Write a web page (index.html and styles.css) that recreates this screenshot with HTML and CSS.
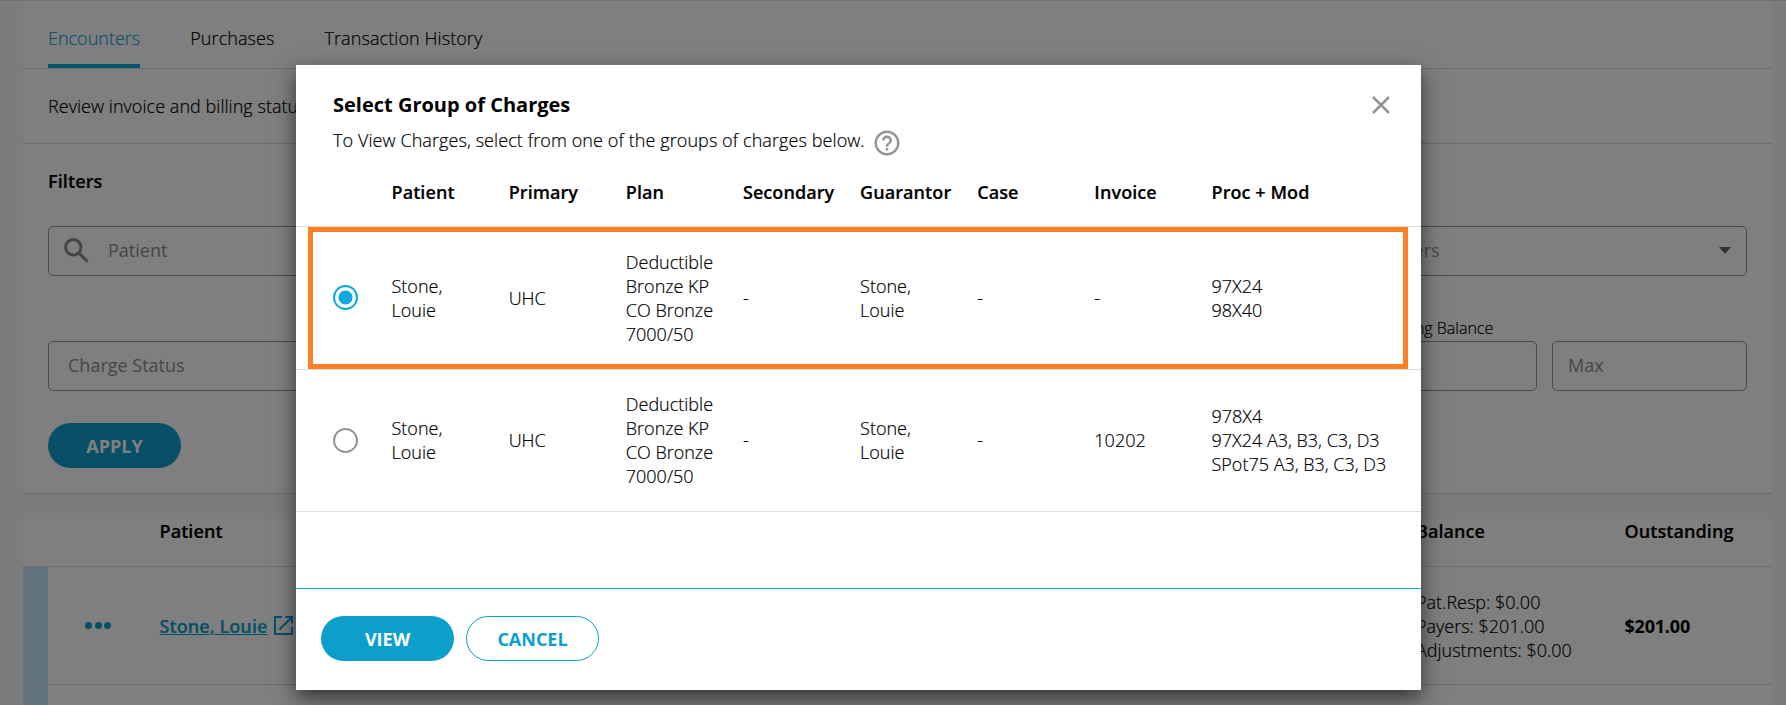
FILE: index.html
```
<!DOCTYPE html>
<html lang="en">
<head>
<meta charset="utf-8">
<title>Encounters</title>
<link rel="stylesheet" href="styles.css">
</head>
<body>
<main class="page">
  <section class="panel">
    <nav class="tabs">
      <a class="tab tab-active">Encounters</a>
      <a class="tab">Purchases</a>
      <a class="tab">Transaction History</a>
    </nav>
    <p class="intro">Review invoice and billing status</p>
    <div class="filters">
      <h2 class="filters-title">Filters</h2>
      <div class="filter-row">
        <div class="field field-search">
          <svg class="search-icon" viewBox="0 0 25 25"><circle cx="9.3" cy="9.3" r="7.7"/><path d="M15.4 15.4l8.3 8.3"/></svg>
          <span>Patient</span>
        </div>
        <div class="field field-select"><span>Providers</span><i class="caret"></i></div>
      </div>
      <div class="filter-row filter-row-second">
        <div class="field field-status"><span>Charge Status</span></div>
        <div class="range">
          <span class="range-label">Outstanding Balance</span>
          <div class="range-fields">
            <div class="field field-range"></div>
            <div class="field field-range"><span>Max</span></div>
          </div>
        </div>
      </div>
      <button class="btn btn-primary">APPLY</button>
    </div>
  </section>
  <section class="encounters">
    <div class="enc-row enc-head"><span class="enc-patient">Patient</span><span>Balance</span><span>Outstanding</span></div>
    <div class="enc-row enc-body">
      <span class="dots"><i></i><i></i><i></i></span>
      <span class="patient-cell"><a class="link">Stone, Louie</a><svg class="open-icon" viewBox="0 0 19 19"><path d="M8 1H1v17h17v-7M11.500 1H18v6.500M18 1L5.500 13.500"/></svg></span>
      <span>Pat.Resp: $0.00<br>Payers: $201.00<br>Adjustments: $0.00</span>
      <b>$201.00</b>
    </div>
    <div class="enc-row enc-next"></div>
  </section>
</main>
<div class="overlay">
  <div class="modal">
    <header class="modal-head">
      <div>
        <h1 class="title">Select Group of Charges</h1>
        <div class="subtitle"><span>To View Charges, select from one of the groups of charges below.</span>
          <svg class="help-icon" viewBox="0 0 24 24"><path d="M11 18h2v-2h-2v2zm1-16C6.480 2 2 6.480 2 12s4.480 10 10 10 10-4.480 10-10S17.520 2 12 2zm0 18c-4.410 0-8-3.590-8-8s3.590-8 8-8 8 3.590 8 8-3.590 8-8 8zm0-14c-2.210 0-4 1.790-4 4h2c0-1.100.9-2 2-2s2 .9 2 2c0 2-3 1.750-3 5h2c0-2.250 3-2.500 3-5 0-2.210-1.790-4-4-4z"/></svg>
        </div>
      </div>
      <svg class="close-icon" viewBox="0 0 18 18"><path d="M1 1l16 16M17 1L1 17"/></svg>
    </header>
    <div class="grid-row grid-head">
      <span></span><span>Patient</span><span>Primary</span><span>Plan</span><span>Secondary</span><span>Guarantor</span><span>Case</span><span>Invoice</span><span>Proc + Mod</span>
    </div>
    <div class="grid-row grid-body selected">
      <i class="radio radio-on"></i><span>Stone, Louie</span><span>UHC</span><span>Deductible Bronze KP CO Bronze 7000/50</span><span>-</span><span>Stone, Louie</span><span>-</span><span>-</span><span class="proc">97X24<br>98X40</span>
    </div>
    <div class="grid-row grid-body">
      <i class="radio"></i><span>Stone, Louie</span><span>UHC</span><span>Deductible Bronze KP CO Bronze 7000/50</span><span>-</span><span>Stone, Louie</span><span>-</span><span>10202</span><span class="proc">978X4<br>97X24 A3, B3, C3, D3<br>SPot75 A3, B3, C3, D3</span>
    </div>
    <footer class="modal-foot">
      <button class="btn btn-primary">VIEW</button>
      <button class="btn btn-outline">CANCEL</button>
    </footer>
  </div>
</div>
</body>
</html>
```
FILE: styles.css
```
* { box-sizing: border-box; }
html, body { height: 100%; }
body {
  margin: 0;
  overflow: hidden;
  background: #f6f9fd;
  color: #000;
  font: 300 18px/24px "Open Sans", sans-serif;
  -webkit-text-stroke: .2px;
}
h1, h2, p { margin: 0; }

.page { height: 705px; overflow: hidden; padding: 0 14px 0 23px; border-top: 1px solid #dcdfe2; }
.panel { background: #fff; border-bottom: 1px solid #d5d9de; height: 493px; }
.tabs { display: flex; gap: 50px; height: 68px; padding: 25px 25px 0; border-bottom: 1px solid #d9d9d9; }
.tab { height: 42px; letter-spacing: .08px; }
.tab-active { color: #0ea5d8; border-bottom: 4px solid #0ea5d8; letter-spacing: 0; }
.intro { height: 75px; padding: 25px 25px 0; border-bottom: 1px solid #d9d9d9; letter-spacing: .04px; }
.filters { padding: 25px 25px 0; }
.filters-title { font-size: 18px; font-weight: 600; line-height: 24px; margin-bottom: 33px; letter-spacing: .12px; }
.filter-row { display: flex; justify-content: space-between; }
.filter-row-second { margin: 42px 0 32px; align-items: flex-end; }
.field { display: flex; align-items: center; height: 50px; padding-bottom: 2px; border: 1px solid #949494; border-radius: 5px; color: #8c8c8c; font-weight: 400; -webkit-text-stroke: 0; }
.field-search { width: 410px; padding-left: 15px; gap: 19px; }
.search-icon { width: 25px; height: 25px; fill: none; stroke: #8a8a8a; stroke-width: 3; }
.field-select { width: 410px; padding-left: 22px; padding-right: 15px; justify-content: space-between; }
.caret { border: 6.500px solid transparent; border-top: 7px solid #666; border-bottom: 0; }
.field-status { width: 410px; padding-left: 19px; }
.range { width: 405px; }
.range-label { display: block; height: 20px; margin-bottom: 3px; padding-left: 2px; font-size: 16px; line-height: 20px; }
.range-fields { display: flex; gap: 15px; }
.field-range { width: 195px; padding-left: 15px; }

.btn { width: 133px; height: 45px; padding: 0; border-radius: 23px; font: 700 18px/24px "Open Sans", sans-serif; -webkit-text-stroke: 0; }
.btn-primary { border: 0; background: #0c9fcc; color: #fff; }
.btn-outline { border: 1px solid #0c9fcc; background: #fff; color: #0c9fcc; }

.encounters { margin-top: 25px; background: #fff; }
.enc-row { display: grid; grid-template-columns: 62px 74.500px 1256.500px 208.500px 1fr; border-bottom: 1px solid #d9d9d9; }
.enc-head { height: 48px; font-weight: 600; letter-spacing: .08px; }
.enc-head .enc-patient { grid-column: 3; }
.enc-body { height: 118px; align-items: center; box-shadow: inset 25px 0 #c0e4fa; }
.enc-body .dots { grid-column: 2; display: flex; gap: 2.500px; }
.enc-body b { font-weight: 700; -webkit-text-stroke: 0; letter-spacing: -.2px; }
.enc-next { height: 30px; box-shadow: inset 25px 0 #c0e4fa; }
.dots i { width: 7px; height: 7px; border-radius: 50%; background: #0aa0cf; }
.patient-cell { display: flex; align-items: center; gap: 7px; }
.link { color: #0aa0cf; font-weight: 600; text-decoration: underline; letter-spacing: .08px; }
.open-icon { width: 19px; height: 19px; fill: none; stroke: #0aa0cf; stroke-width: 2; }

.overlay { position: absolute; inset: 0; padding: 65px 0 0 296px; background: rgba(0, 0, 0, .5); }
.modal { display: flex; flex-direction: column; width: 1125px; height: 625px; background: #fff; box-shadow: 0 8px 20px rgba(0, 0, 0, .6); }
.modal-head { display: flex; justify-content: space-between; height: 115px; padding: 28px 31px 0 37px; }
.title { font-size: 20px; font-weight: 700; line-height: 24px; -webkit-text-stroke: 0; }
.subtitle { display: flex; align-items: flex-start; gap: 7px; margin-top: 12px; letter-spacing: .085px; }
.subtitle span { margin-top: -1px; }
.help-icon { width: 30px; height: 30px; margin: -1px 0 0; fill: #949494; }
.close-icon { width: 18px; height: 18px; margin-top: 3px; fill: none; stroke: #949494; stroke-width: 2.500; }
.grid-row { display: grid; grid-template-columns: 58.500px repeat(7, 117.150px) 1fr; padding-left: 37px; border-bottom: 1px solid #ddd; }
.grid-row > span { padding-right: 24px; }
.grid-head { height: 47px; font-weight: 600; letter-spacing: .08px; }
.grid-body { height: 142px; padding-bottom: 1px; align-items: center; }
.selected { position: relative; height: 143px; padding-bottom: 0; }
.selected::after { content: ""; position: absolute; inset: 0 13px 0 12px; border: 5px solid #ff7f27; }
.grid-row > .proc { padding: 0; white-space: nowrap; }
.radio { width: 25px; height: 25px; border: 2px solid #949494; border-radius: 50%; }
.radio-on { margin-bottom: 1px; border-color: #0eaadf; background: radial-gradient(circle, #0eaadf 6.700px, transparent 7.300px); }
.modal-foot { display: flex; gap: 12px; height: 102px; margin-top: auto; padding: 27px 25px 0; border-top: 1px solid #0eaadf; }
```
